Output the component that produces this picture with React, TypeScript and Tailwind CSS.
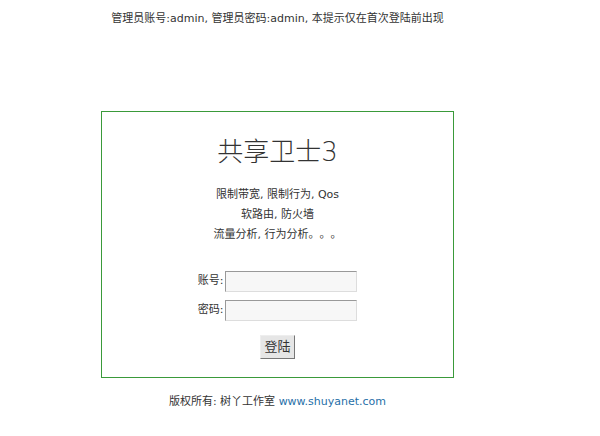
import React from "react";

const font = { fontFamily: '"DejaVu Sans", "Noto Sans CJK SC", sans-serif' };

export default function App() {
    return (
        <div className="w-[555px] text-center text-[11px] text-[#333] [text-spacing-trim:space-all]" style={font}>
            <p className="pt-[12px] leading-[14px]">管理员账号:admin, 管理员密码:admin, 本提示仅在首次登陆前出现</p>

            <div className="mt-[85px] mx-auto w-[353px] border border-[#3a9a3a] pt-[24px] pb-[18px]">
                <h1 className="text-[26px] leading-[32px] font-light">共享卫士3</h1>
                <div className="mt-[17px] leading-[20px]">
                    <p>限制带宽, 限制行为, Qos</p>
                    <p>软路由, 防火墙</p>
                    <p>流量分析, 行为分析。。。</p>
                </div>
                <form className="mt-[26px] flex flex-col items-center gap-[8px]">
                    <div className="flex items-center gap-[2px]">
                        <label>账号:</label>
                        <input className="w-[132px] h-[21px] border border-t-[#999] border-l-[#999] border-r-[#ddd] border-b-[#ddd] bg-[#f7f7f7] outline-none" />
                    </div>
                    <div className="flex items-center gap-[2px]">
                        <label>密码:</label>
                        <input type="password" className="w-[132px] h-[21px] border border-t-[#999] border-l-[#999] border-r-[#ddd] border-b-[#ddd] bg-[#f7f7f7] outline-none" />
                    </div>
                    <button type="button" className="mt-[6px] w-[35px] h-[24px] text-[13px] bg-[#e6e6e6] border border-t-[#eee] border-l-[#eee] border-r-[#777] border-b-[#777]">登陆</button>
                </form>
            </div>

            <p className="mt-[17px] leading-[14px]">
                版权所有: 树丫工作室 <a href="#" className="text-[#1f6fa8]">www.shuyanet.com</a>
            </p>
        </div>
    );
}
